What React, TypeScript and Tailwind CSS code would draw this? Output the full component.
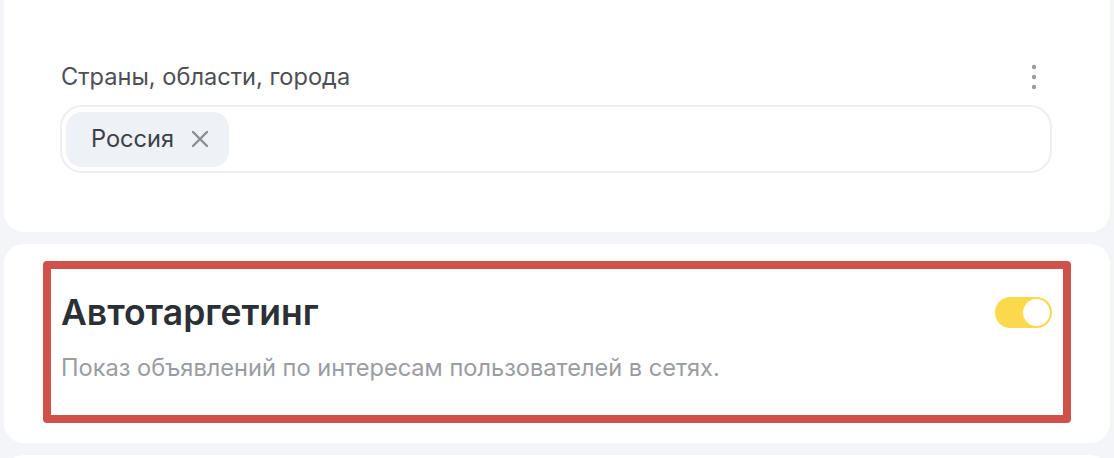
import React from "react";

export default function App() {
  return (
    <div
      className="w-[1114px] h-[458px] overflow-hidden bg-[#f3f5f8] px-[4px] flex flex-col gap-[12px]"
      style={{ fontFamily: "Inter, 'Noto Sans', sans-serif" }}
    >
      <div className="bg-white rounded-b-[20px] h-[232px] shrink-0 px-[57px] pt-[62px]">
        <div className="flex items-center justify-between pr-[56px]">
          <span className="text-[23.6px] leading-[30px] text-[#4d4f55]">Страны, области, города</span>
          <svg width="6" height="26" viewBox="0 0 6 26" className="mr-[-40px]">
            <circle cx="3" cy="3" r="2.2" fill="#9a9ca3" />
            <circle cx="3" cy="13" r="2.2" fill="#9a9ca3" />
            <circle cx="3" cy="23" r="2.2" fill="#9a9ca3" />
          </svg>
        </div>
        <div className="mt-[13px] h-[68px] w-[992px] -ml-[1px] rounded-[22px] border-[2px] border-[#eceef1] flex items-center pl-[4px]">
          <div className="h-[55px] rounded-[16px] bg-[#eef1f6] flex items-center pl-[25px] pr-[20px] gap-[17px]">
            <span className="text-[23.6px] text-[#3d4048]">Россия</span>
            <svg width="18" height="18" viewBox="0 0 18 18">
              <path d="M2 2 L16 16 M16 2 L2 16" stroke="#8b8e95" strokeWidth="2.4" strokeLinecap="round" />
            </svg>
          </div>
        </div>
      </div>
      <div className="bg-white rounded-[20px] h-[199px] shrink-0 px-[39px] pt-[17px]">
        <div className="h-[162px] border-[8px] border-[#cf5149] rounded-[4px] pl-[10px] pr-[10px] pt-[22px]">
          <div className="flex items-start justify-between">
            <span className="text-[35.5px] leading-[44px] font-semibold text-[#2b2f36]">Автотаргетинг</span>
            <div className="mt-[6px] mr-[1px] w-[57px] h-[31px] rounded-full bg-[#fcd94b] flex items-center justify-end pr-[2px]">
              <div className="w-[27px] h-[27px] rounded-full bg-white" />
            </div>
          </div>
          <div className="mt-[18px] text-[23.6px] leading-[30px] text-[#9a9ca3]">
            Показ объявлений по интересам пользователей в сетях.
          </div>
        </div>
      </div>
      <div className="bg-white rounded-t-[20px] h-[40px] shrink-0" />
    </div>
  );
}
